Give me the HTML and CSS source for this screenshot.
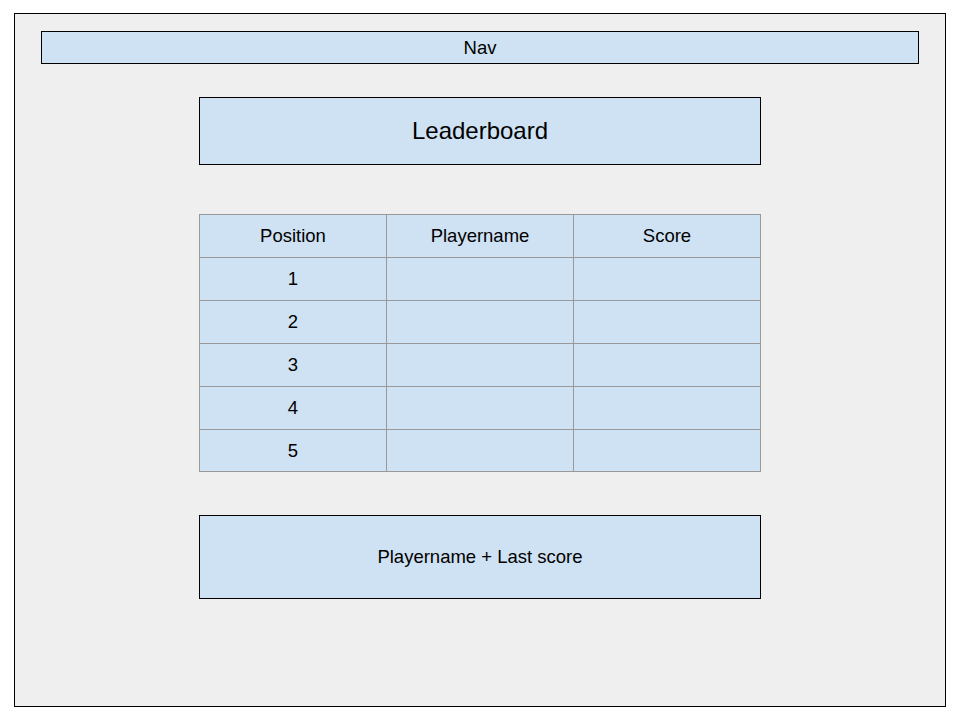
FILE: index.html
```html
<!DOCTYPE html>
<html>
<head>
<meta charset="utf-8">
<link rel="stylesheet" href="styles.css">
</head>
<body>
<div class="frame">
  <div class="nav">Nav</div>
  <div class="column">
    <div class="title">Leaderboard</div>
    <table class="board">
      <tr><td>Position</td><td>Playername</td><td>Score</td></tr>
      <tr><td>1</td><td></td><td></td></tr>
      <tr><td>2</td><td></td><td></td></tr>
      <tr><td>3</td><td></td><td></td></tr>
      <tr><td>4</td><td></td><td></td></tr>
      <tr class="end"><td>5</td><td></td><td></td></tr>
    </table>
    <div class="last">Playername + Last score</div>
  </div>
</div>
</body>
</html>
```
FILE: styles.css
```css
html, body {
  margin: 0;
  padding: 0;
  background: #ffffff;
}
body {
  font-family: "Liberation Sans", Arial, sans-serif;
  color: #000;
  font-size: 18.5px;
}
.frame {
  box-sizing: border-box;
  margin: 13px 0 0 14px;
  width: 932px;
  height: 694px;
  border: 1px solid #000;
  background: #efefef;
  padding: 17px 26px 0 26px;
  display: flex;
  flex-direction: column;
  align-items: center;
}
.nav {
  box-sizing: border-box;
  width: 878px;
  height: 33px;
  border: 1px solid #000;
  background: #cfe2f3;
  display: flex;
  align-items: center;
  justify-content: center;
}
.column {
  width: 562px;
  margin-top: 33px;
  display: flex;
  flex-direction: column;
}
.title {
  box-sizing: border-box;
  height: 68px;
  border: 1px solid #000;
  background: #cfe2f3;
  display: flex;
  align-items: center;
  justify-content: center;
  font-size: 24px;
}
.board {
  margin-top: 49px;
  width: 562px;
  border-collapse: collapse;
  table-layout: fixed;
  background: #cfe2f3;
}
.board td {
  border: 1px solid #999999;
  height: 42px;
  padding: 0;
  text-align: center;
  vertical-align: middle;
}
.board .end td {
  height: 41px;
}
.last {
  box-sizing: border-box;
  margin-top: 43px;
  height: 84px;
  border: 1px solid #000;
  background: #cfe2f3;
  display: flex;
  align-items: center;
  justify-content: center;
}
```
